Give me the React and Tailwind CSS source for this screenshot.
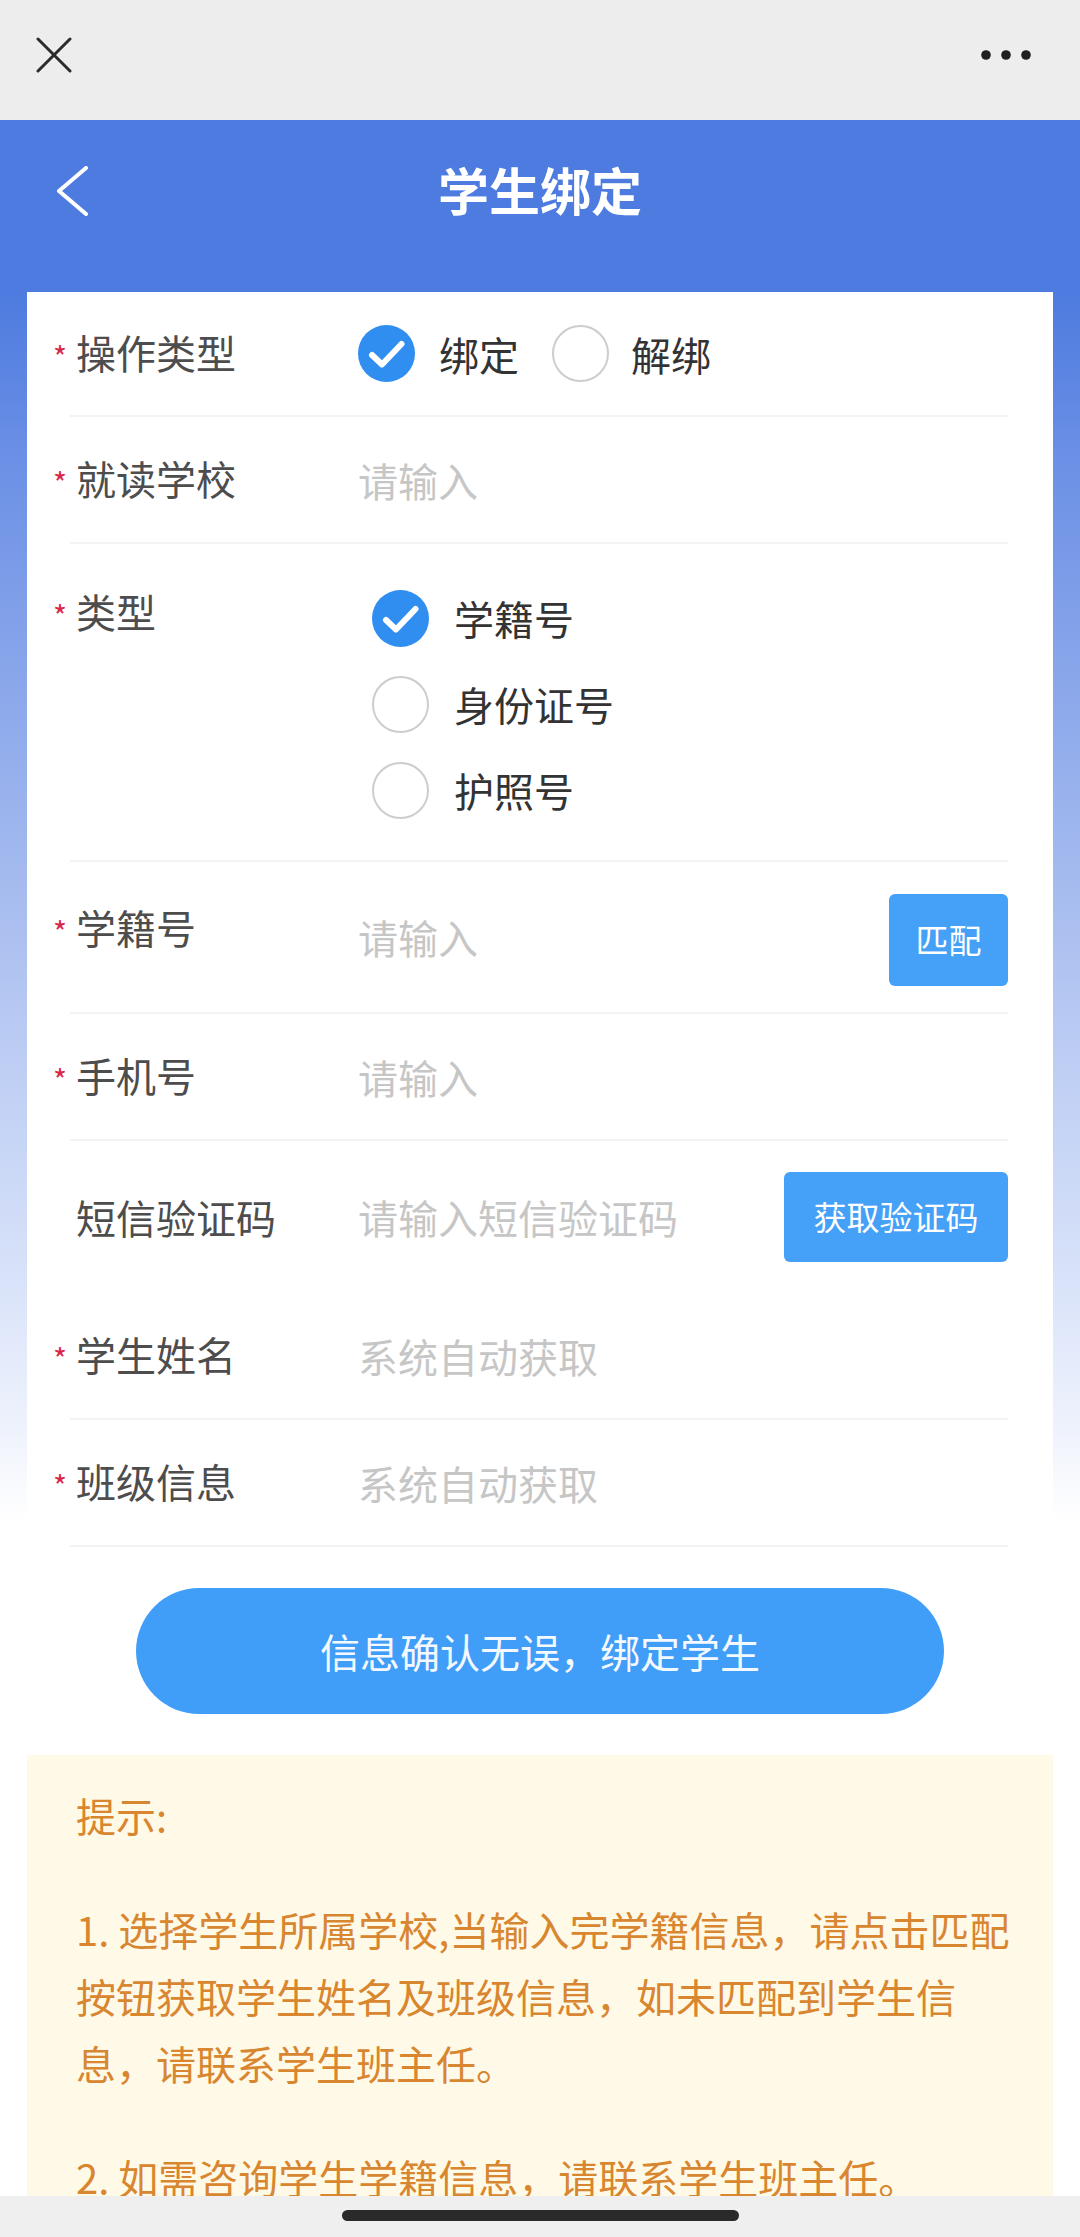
import React from 'react';

const Radio = ({ checked }) =>
  checked ? (
    <span className="flex h-[57px] w-[57px] shrink-0 items-center justify-center rounded-full bg-[#2f8ef0]">
      <svg width="57" height="57" viewBox="0 0 57 57">
        <path d="M14 30 L24 39.5 L43.5 19" fill="none" stroke="#fff" strokeWidth="6" strokeLinecap="round" strokeLinejoin="round" />
      </svg>
    </span>
  ) : (
    <span className="h-[57px] w-[57px] shrink-0 rounded-full border-2 border-[#cdcdcd]" />
  );

const Label = ({ required, text, className = '' }) => (
  <div className={`-ml-[17px] w-[305px] shrink-0 text-[40px] leading-[56px] text-[#4d4d4d] ${className}`}>
    <span className="inline-block w-[23px] text-[30px] text-[#d9294b]">{required ? '*' : ''}</span>
    {text}
  </div>
);

const Placeholder = ({ children, className = '' }) => (
  <div className={`flex-1 text-[40px] leading-[56px] text-[#c6c6c6] ${className}`}>{children}</div>
);

export default function App() {
  return (
    <div className="relative h-[2237px] w-[1080px] overflow-hidden bg-white font-['Noto_Sans_CJK_SC','Noto_Sans',sans-serif]">
      {/* top bar */}
      <div className="flex h-[120px] items-start justify-between bg-[#ededed] pl-[36px] pr-[49px] pt-[37px]">
        <svg width="36" height="36" viewBox="0 0 36 36">
          <path d="M2 2 L34 34 M34 2 L2 34" stroke="#2b2b2b" strokeWidth="3" strokeLinecap="round" />
        </svg>
        <svg width="50" height="10" viewBox="0 0 50 10" className="mt-[13px]">
          <circle cx="5" cy="5" r="4.8" fill="#1f1f1f" />
          <circle cx="25" cy="5" r="4.8" fill="#1f1f1f" />
          <circle cx="45" cy="5" r="4.8" fill="#1f1f1f" />
        </svg>
      </div>

      <div className="bg-[linear-gradient(180deg,#4d7bdf_0px,#4d7bdf_172px,#6a8fe5_330px,#8eaaeb_593px,#b5c7f2_880px,#d9e3f9_1164px,#eef2fc_1307px,#ffffff_1400px)]">
        {/* header */}
        <div className="grid h-[142px] grid-cols-[1fr_auto_1fr] items-center">
          <div className="pl-[55px]">
            <svg width="34" height="50" viewBox="0 0 34 50">
              <path d="M31 2 L4 25 L31 48" fill="none" stroke="#fff" strokeWidth="4" strokeLinecap="round" strokeLinejoin="round" />
            </svg>
          </div>
          <div className="-mt-[4px] text-[51px] font-bold leading-[60px] text-white">学生绑定</div>
          <div />
        </div>
        <div className="h-[30px]" />

        {/* form card */}
        <div className="mx-[27px] bg-white pl-[43px] pr-[45px]">
          <div className="flex h-[125px] items-center border-b-2 border-[#f3f3f3]">
            <Label required text="操作类型" />
            <div className="flex items-center gap-[33px] text-[40px] leading-[56px] text-[#333]">
              <div className="flex items-center gap-[24px]">
                <Radio checked />
                <span>绑定</span>
              </div>
              <div className="flex items-center gap-[22px]">
                <Radio />
                <span>解绑</span>
              </div>
            </div>
          </div>

          <div className="flex h-[127px] items-center border-b-2 border-[#f3f3f3]">
            <Label required text="就读学校" />
            <Placeholder>请输入</Placeholder>
          </div>

          <div className="flex h-[318px] items-start border-b-2 border-[#f3f3f3]">
            <Label required text="类型" className="pt-[39px]" />
            <div className="pl-[14px] pt-[31px] text-[40px] leading-[56px] text-[#333]">
              {['学籍号', '身份证号', '护照号'].map((t, i) => (
                <div key={t} className="flex h-[86px] items-center gap-[25px]">
                  <Radio checked={i === 0} />
                  <span>{t}</span>
                </div>
              ))}
            </div>
          </div>

          <div className="flex h-[152px] items-start border-b-2 border-[#f3f3f3]">
            <Label required text="学籍号" className="pt-[37px]" />
            <div className="flex flex-1 items-center pt-[32px]">
              <Placeholder className="pb-[6px]">请输入</Placeholder>
              <button className="h-[92px] w-[119px] rounded-[6px] bg-[#45a0f7] text-[33px] text-white">匹配</button>
            </div>
          </div>

          <div className="flex h-[127px] items-center border-b-2 border-[#f3f3f3]">
            <Label required text="手机号" />
            <Placeholder>请输入</Placeholder>
          </div>

          <div className="flex h-[153px] items-center pb-[2px]">
            <Label text="短信验证码" />
            <Placeholder>请输入短信验证码</Placeholder>
            <button className="h-[90px] w-[224px] rounded-[6px] bg-[#45a0f7] text-[33px] text-white">获取验证码</button>
          </div>

          <div className="flex h-[126px] items-center border-b-2 border-[#f3f3f3]">
            <Label required text="学生姓名" />
            <Placeholder>系统自动获取</Placeholder>
          </div>

          <div className="flex h-[127px] items-center border-b-2 border-[#f3f3f3]">
            <Label required text="班级信息" />
            <Placeholder>系统自动获取</Placeholder>
          </div>
        </div>
      </div>

      <div className="pt-[41px]">
        <button className="mx-auto block h-[126px] w-[808px] rounded-full bg-[#409ef8] text-[40px] text-[#f4f9ff]">
          信息确认无误，绑定学生
        </button>
      </div>

      {/* tips */}
      <div className="mx-[27px] mt-[41px] bg-[#fffae8] pb-[80px] pl-[49px] pr-[40px] pt-[27px] text-[40px] leading-[67px] text-[#d8862f]">
        <p className="mb-[47px]">提示:</p>
        <p className="mb-[47px]">1. 选择学生所属学校,当输入完学籍信息，请点击匹配按钮获取学生姓名及班级信息，如未匹配到学生信息，请联系学生班主任。</p>
        <p>2. 如需咨询学生学籍信息，请联系学生班主任。</p>
      </div>

      {/* home indicator */}
      <div className="absolute bottom-0 left-0 right-0 h-[41px] bg-[#efefef] pt-[14px]">
        <div className="mx-auto h-[11px] w-[397px] rounded-full bg-[#2a2a2a]" />
      </div>
    </div>
  );
}
